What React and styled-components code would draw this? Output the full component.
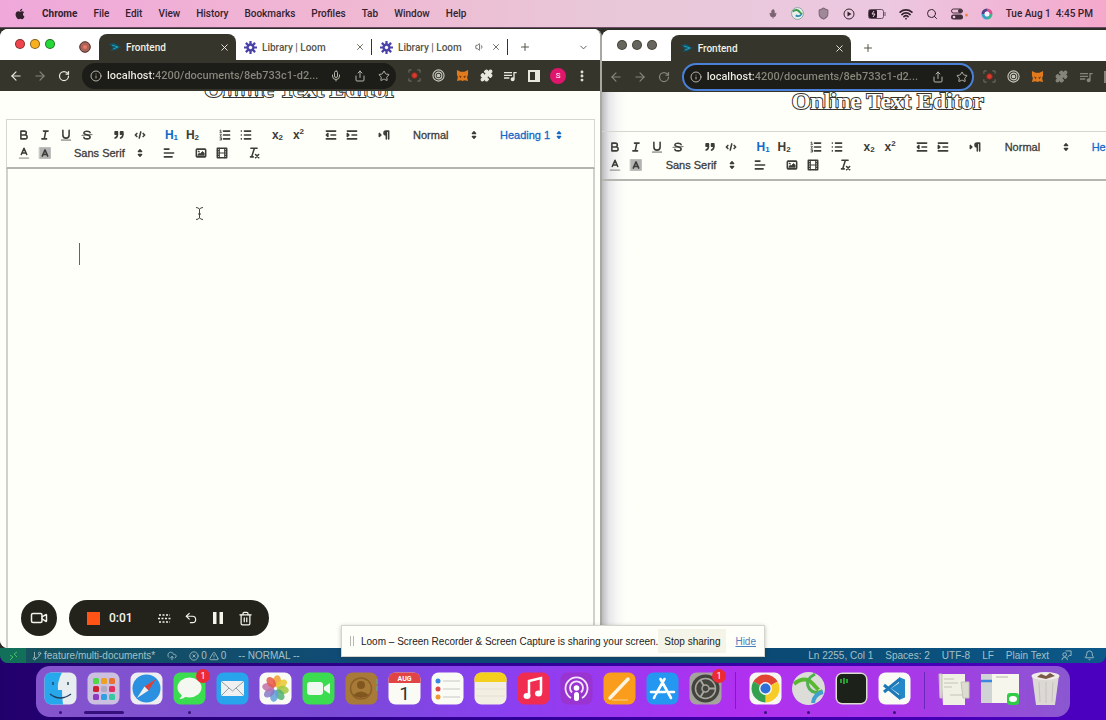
import React from "react";
import styled, { createGlobalStyle, css } from "styled-components";
import {
  ArrowLeft, ArrowRight, RotateCw, Info, Mic, Share, Star, X, Plus, ChevronDown,
  EllipsisVertical, Wifi, Search, Trash2, Undo2, Volume1, Shield, Puzzle,
  GitBranch, CloudUpload, CircleX, TriangleAlert, Bell, Video,
} from "lucide-react";
import { FaApple } from "react-icons/fa";
import { MdOutlineQueueMusic } from "react-icons/md";

const Global = createGlobalStyle`
  * { box-sizing: border-box; }
  html, body { margin: 0; }
  body { font-family: Roboto, "Liberation Sans", sans-serif; font-size: 10px; background: #2b0088; }
  button, input, select { font: inherit; color: inherit; border: 0; margin: 0; padding: 0; background: none; }
  svg { display: block; flex: none; }
`;

const Desktop = styled.main`
  position: relative;
  min-height: 100vh;
  display: flex;
  flex-direction: column;
  overflow: hidden;
  background: linear-gradient(90deg, #22006c, #32009a 50%, #4c00c0);
`;

/* ---------- menu bar ---------- */
const MenuBar = styled.header`
  height: 28px;
  display: flex;
  align-items: center;
  justify-content: space-between;
  padding: 0 13px 0 14px;
  color: #33222e;
  background: linear-gradient(90deg, #efa8da, #f0b6d2 30%, #e8c8d8 55%, #ecc8e0 80%, #f4a8cc);
  border-bottom: 1px solid #6d4a66;
`;
const MenuGroup = styled.nav`
  display: flex;
  align-items: center;
  gap: ${(p) => p.$gap || 16}px;
  white-space: nowrap;
`;
const MenuItem = styled.button`
  font-weight: ${(p) => (p.$strong ? 700 : 500)};
`;

/* ---------- browser windows ---------- */
const Windows = styled.section`
  flex: 1;
  display: flex;
  overflow: hidden;
  background: #2e2e28;
`;
const Window = styled.section`
  min-width: 0;
  display: flex;
  flex-direction: column;
  overflow: hidden;
  background: #fffffa;
  flex: ${(p) => (p.$back ? "1 1 0" : "0 0 54.4%")};
  border-radius: ${(p) => (p.$back ? "8px 0 0 0" : "8px 8px 0 8px")};
  border-right: ${(p) => (p.$back ? "0" : "2px solid #a8a8a0")};
  margin-top: ${(p) => (p.$back ? 2 : 1)}px;
`;
const TabStrip = styled.div`
  height: 31px;
  display: flex;
  align-items: flex-end;
  background: #fff;
  color: #55554a;
  padding-left: 15px;
  overflow: hidden;
  flex: none;
`;
const Lights = styled.div`
  display: flex;
  gap: 5px;
  height: 26px;
  padding-top: 5px;
  margin-right: ${(p) => (p.$back ? 14 : 24)}px;
`;
const Light = styled.i`
  width: 10px;
  height: 10px;
  border-radius: 50%;
  border: 1px solid rgba(40, 30, 10, 0.55);
  background: ${(p) => p.$c};
`;
const Pinned = styled.button`
  height: 26px;
  width: 20px;
`;
const Tab = styled.button`
  height: 26px;
  width: ${(p) => p.$w}px;
  flex: none;
  display: flex;
  align-items: center;
  gap: 5px;
  padding: 0 6px 0 8px;
  white-space: nowrap;
  font-weight: 500;
  ${(p) => p.$active && css`
    color: #f0f0e4;
    padding: 0 6px 0 10px;
    background: #35352c;
    border-radius: 8px 8px 0 0;
  `}
  ${(p) => p.$line && css`
    border-right: 1px solid #44443a;
    border-image: linear-gradient(transparent 22%, #33332a 22% 78%, transparent 78%) 1;
  `}
`;
const TabEnd = styled.span`
  display: flex;
  gap: 6px;
  margin-left: auto;
`;
const StripButton = styled.button`
  height: 26px;
  padding: 0 11px;
  margin-left: ${(p) => (p.$end ? "auto" : "0")};
`;
const BrowserBar = styled.div`
  height: 31px;
  flex: none;
  display: flex;
  align-items: center;
  gap: 12px;
  padding: 0 10px 0 ${(p) => (p.$back ? 8 : 10)}px;
  overflow: hidden;
  background: #35352c;
  color: ${(p) => (p.$back ? "#85857a" : "#e8e8dc")};
`;
const IconButton = styled.button`
  display: flex;
  align-items: center;
  justify-content: center;
  width: 12px;
  height: 16px;
  flex: none;
  color: ${(p) => p.$c || "inherit"};
`;
const Omnibox = styled.label`
  flex: ${(p) => (p.$back ? "0 0 292px" : "0 1 314px")};
  height: ${(p) => (p.$back ? 28 : 26)}px;
  display: flex;
  align-items: center;
  gap: 12px;
  padding: 0 4px 0 6px;
  border-radius: 14px;
  color: #b4b4a8;
  background: #1c1c18;
  border: 2px solid ${(p) => (p.$back ? "#4a80d8" : "#1c1c18")};
  margin-right: ${(p) => (p.$back ? -2 : 0)}px;
`;
const UrlInput = styled.input`
  flex: 1;
  min-width: 0;
  margin-left: -7px;
  font-size: 11px;
  font-weight: 500;
  outline: 0;
  color: transparent;
  background: linear-gradient(90deg, #f0f0e6 47px, #88887c 47px);
  background-clip: text;
  -webkit-background-clip: text;
`;
const Avatar = styled.button`
  width: 16px;
  height: 16px;
  flex: none;
  margin: 0 -2px;
  border-radius: 50%;
  font-size: 8px;
  color: #fff;
  background: #e0156c;
`;

/* ---------- document page ---------- */
const Page = styled.div`
  flex: 1;
  display: flex;
  overflow: hidden;
  background: ${(p) => (p.$back ? "linear-gradient(90deg, #bcbcc0, #e6e6e8 7px, #f8f8f6 16px, #fffffa 26px)" : "#fffffa")};
  padding: ${(p) => (p.$back ? "0" : "0 5px 0 6px")};
`;
const Doc = styled.article`
  flex: 1 0 ${(p) => (p.$back ? "572px" : "0")};
  display: flex;
  flex-direction: column;
  margin-top: ${(p) => (p.$back ? -5 : -16)}px;
`;
const Heading = styled.h1`
  margin: 0 0 16px;
  font: bold 24px/28px "Liberation Serif", serif;
  text-align: center;
  color: #fff;
  -webkit-text-stroke: 2px #33332c;
  paint-order: stroke fill;
`;
const Tools = styled.div`
  height: 50px;
  border: 1px solid #d6d6d0;
  border-width: ${(p) => (p.$back ? "1px 0" : "1px")};
  border-bottom: 2px solid #b4b4b0;
  padding: ${(p) => (p.$back ? "6px 3px" : "6px")};
  font: 11px/18px "Liberation Sans", Arial, sans-serif;
  color: #3c3c38;
`;
const ToolRow = styled.div`
  display: flex;
  gap: 11px;
`;
const ToolGroup = styled.div`
  display: flex;
`;
const Tool = styled.button`
  width: 21px;
  height: 18px;
  display: flex;
  align-items: center;
  justify-content: center;
  white-space: nowrap;
  font: bold 12px/18px "Liberation Sans", Arial, sans-serif;
  color: ${(p) => (p.$on ? "#1468c8" : "#3c3c38")};
  small { font-size: 8px; line-height: 8px; align-self: ${(p) => (p.$sup ? "flex-start" : "flex-end")}; margin: 2px 0; }
`;
const Picker = styled.label`
  position: relative;
  display: flex;
  align-items: center;
  width: ${(p) => p.$w}px;
  height: 18px;
  color: ${(p) => (p.$on ? "#1468c8" : "inherit")};
  svg { position: absolute; right: 0; pointer-events: none; }
`;
const PickerSelect = styled.select`
  appearance: none;
  width: 100%;
  height: 18px;
  padding-left: 8px;
  -webkit-text-stroke: 0.3px currentColor;
`;
const Editor = styled.div`
  flex: 1;
  padding: 74px 71px;
  border: 2px solid #d0d0cc;
  border-width: ${(p) => (p.$back ? "0" : "0 2px")};
`;
const Caret = styled.i`
  display: block;
  width: 1px;
  height: 22px;
  background: #66665c;
`;
const Pointer = styled.svg`
  position: absolute;
  left: 195px;
  top: 207px;
`;

/* ---------- editor status line ---------- */
const StatusBar = styled.footer`
  height: 15px;
  display: flex;
  align-items: center;
  justify-content: space-between;
  padding-right: 11px;
  font-family: "Liberation Sans", Arial, sans-serif;
  color: #a4c0c4;
  background: linear-gradient(90deg, #17525c, #0e4a78 35%, #0a4a74 70%, #0c5888);
  border-radius: 0 0 8px 8px;
  overflow: hidden;
`;
const StatusGroup = styled.div`
  display: flex;
  align-items: center;
  gap: 12px;
  white-space: nowrap;
`;
const StatusItem = styled.span`
  display: flex;
  align-items: center;
  gap: 2px;
`;
const Remote = styled.button`
  width: 26px;
  height: 15px;
  margin-right: -6px;
  display: flex;
  align-items: center;
  justify-content: center;
  background: #12705a;
  color: #48c060;
`;

/* ---------- dock ---------- */
const DockArea = styled.footer`
  display: flex;
  justify-content: center;
  padding: 3px 0;
`;
const DockBar = styled.nav`
  height: 51px;
  display: flex;
  gap: 10px;
  padding: 6px 8px 0;
  border-radius: 14px;
  background: linear-gradient(90deg, #8455cc, #7a4ad8 30%, #8a40f0 45%, #b030f0 68%, #a838e8 85%, #8a58d0);
`;
const DockItem = styled.button`
  position: relative;
  width: ${(p) => p.$w || 33}px;
  height: 42px;
  display: flex;
  align-items: flex-start;
  &::after {
    content: "";
    display: ${(p) => (p.$run ? "block" : "none")};
    position: absolute;
    bottom: 0;
    left: calc(50% - ${(p) => (p.$run || 0) / 2}px);
    width: ${(p) => p.$run}px;
    height: 3px;
    border-radius: 2px;
    background: #35107c;
  }
`;
const Badge = styled.span`
  position: absolute;
  top: -3px;
  right: -4px;
  width: 14px;
  height: 14px;
  border-radius: 50%;
  font-size: 9px;
  line-height: 14px;
  color: #fff;
  background: #ec2a34;
`;
const Divider = styled.i`
  width: 1px;
  height: 37px;
  margin: 0 3px;
  background: #6a28b8;
`;

/* ---------- floating panels ---------- */
const Recorder = styled.div`
  position: absolute;
  left: 21px;
  bottom: 84px;
  display: flex;
  gap: 12px;
  color: #f4f4ea;
`;
const CameraButton = styled.button`
  width: 36px;
  height: 36px;
  display: grid;
  place-items: center;
  border-radius: 50%;
  background: #23231c;
`;
const RecorderPill = styled.div`
  height: 36px;
  display: flex;
  align-items: center;
  gap: 15px;
  padding: 0 18px;
  border-radius: 18px;
  background: #23231c;
`;
const Elapsed = styled.time`
  width: 34px;
  margin-left: -6px;
  font-size: 12px;
  font-weight: 500;
`;
const StopSquare = styled.button`
  width: 13px;
  height: 13px;
  background: #ff5416;
`;
const ShareNotice = styled.aside`
  position: absolute;
  left: 50%;
  transform: translateX(-50%);
  bottom: 63px;
  width: 424px;
  height: 32px;
  display: flex;
  align-items: center;
  padding: 0 8px 0 7px;
  white-space: nowrap;
  font-family: "Liberation Sans", Arial, sans-serif;
  color: #22221c;
  background: #fffffa;
  border: 1px solid #d4d4cc;
  box-shadow: 0 1px 4px rgba(40, 40, 30, 0.3);
`;
const NoticeText = styled.span`
  flex: 1;
  margin-left: 6px;
`;
const StopSharing = styled.button`
  width: 78px;
  height: 24px;
  background: #f4f4e8;
`;
const HideLink = styled.a`
  margin-left: 9px;
  color: #4a80c0;
`;

const S = (p) => <svg width="14" height="14" viewBox="0 0 18 18" fill="none" stroke="currentColor" strokeWidth="2" strokeLinecap="round" strokeLinejoin="round" aria-hidden="true" {...p} />;

const Arrows = () => (
  <S><polygon points="7 11 9 13 11 11" fill="currentColor" /><polygon points="7 7 9 5 11 7" fill="currentColor" /></S>
);

const Leaf = () => (
  <svg width="12" height="12" viewBox="0 0 12 12"><path d="M0 3l5-1 7 4-5 3-6 1 3-3z" fill="#125468" /><path d="M3 4l6 2-5 2" stroke="#22a0b8" fill="none" /></svg>
);
const Loom = () => (
  <svg width="13" height="13" viewBox="0 0 14 14" fill="none" stroke="#4a42a8">
    <g strokeWidth="2.4"><path d="M7 0v14M0 7h14M2 2l10 10M12 2L2 12" /></g>
    <circle cx="7" cy="7" r="4" fill="#4a42a8" /><circle cx="7" cy="7" r="1.8" fill="#fff" stroke="none" />
  </svg>
);
const Target = ({ c = "#c8c8bc" }) => (
  <svg width="13" height="13" viewBox="0 0 14 14" fill="none" stroke={c} strokeWidth="1.2"><circle cx="7" cy="7" r="6" /><circle cx="7" cy="7" r="3.6" /><circle cx="7" cy="7" r="1.4" fill={c} /></svg>
);
const Capture = () => (
  <svg width="13" height="13" viewBox="0 0 14 14" fill="none" stroke="#77776a"><path d="M1 4V1h3M10 1h3v3M13 10v3h-3M4 13H1v-3" /><circle cx="7" cy="7" r="3" fill="#d83a2c" stroke="#8a2a20" /></svg>
);
const Fox = () => (
  <svg width="13" height="13" viewBox="0 0 14 14"><path d="M1 1l4 2h4l4-2v5l-1 3 1 4-4-1-2 1-2-1-4 1 1-4-1-3z" fill="#e07a1c" /><path d="M3 7l3 1-1 2zM11 7L8 8l1 2z" fill="#6a3410" /></svg>
);
const SidePanel = () => (
  <svg width="12" height="12" viewBox="0 0 12 12"><rect x="1" y="1" width="10" height="10" fill="none" stroke="currentColor" strokeWidth="2" /><path d="M7 1h4v10H7z" fill="currentColor" /></svg>
);
const Globe = () => (
  <svg width="13" height="13" viewBox="0 0 14 14"><circle cx="7" cy="7" r="6.4" fill="#e8efe8" stroke="#8aa0a0" /><path d="M2 5q4-4 8 1l2 2" stroke="#3a9a50" strokeWidth="2" fill="none" /><path d="M5 9q4 2 6-1" stroke="#308ab8" strokeWidth="2" fill="none" /></svg>
);
const PlayRing = () => (
  <svg width="12" height="12" viewBox="0 0 12 12"><circle cx="6" cy="6" r="5" fill="none" stroke="currentColor" /><path d="M4.500 3.500v5l4-2.500z" fill="currentColor" /></svg>
);
const Controls = () => (
  <svg width="17" height="12" viewBox="0 0 17 12"><rect x=".5" y="1" width="11" height="4" rx="2" fill="none" stroke="#44303c" /><circle cx="9" cy="3" r="2" fill="#44303c" /><rect x="0" y="6.500" width="12" height="5" rx="2.500" fill="#44303c" /><circle cx="3" cy="9" r="1.300" fill="#ecc8e0" /><circle cx="15.500" cy="7" r="1.500" fill="#f08840" /></svg>
);
const Siri = () => (
  <svg width="12" height="12" viewBox="0 0 12 12" fill="none" strokeWidth="3"><path d="M6 2a4 4 0 0 0-4 4" stroke="#50408a" /><path d="M2 6a4 4 0 0 0 4 4" stroke="#3aa0c8" /><path d="M6 10a4 4 0 0 0 4-4" stroke="#38b890" /><path d="M10 6a4 4 0 0 0-4-4" stroke="#d85090" /><circle cx="6" cy="6" r="2.4" fill="#f4f4ff" stroke="none" /></svg>
);
const Battery = () => (
  <svg width="18" height="10" viewBox="0 0 18 10"><rect x=".5" y=".5" width="15" height="9" rx="2" fill="none" stroke="#66505e" /><rect x="1" y="1" width="8" height="8" rx="1" fill="#2a1c26" /><path d="M6 2L4 5h3L5 8" stroke="#eed0e0" fill="none" /><path d="M17 3v4" stroke="#66505e" /></svg>
);

function ToolbarOptions({ back }) {
  const opts = [
    ["Bold", <S><path d="M5,4H9.5a2.5,2.5,0,0,1,0,5H5ZM5,9h5.5a2.5,2.5,0,0,1,0,5H5Z" /></S>],
    ["Italic", <S><path d="M7,4H13M5,14H11M8,14L10,4" /></S>],
    ["Underline", <S><path d="M5,3V9a4,4,0,0,0,8,0V3" /><path d="M3,15.5H15" strokeWidth="1" /></S>],
    ["Strike", <S><path d="M15.5,8.5L2.5,9.5" strokeWidth="1" /><path d="M13,6C12.500,4,5,3,5,6.500C5,9.500,13,8,13,11.500C13,15,5.500,14.500,5,12" /></S>],
  ];
  const list = (marks) => <S><path d="M7,4H15M7,9H15M7,14H15" />{marks}</S>;
  return (
    <Tools $back={back} role="toolbar" aria-label="Formatting">
      <ToolRow>
        <ToolGroup>{opts.map(([n, i]) => <Tool key={n} aria-label={n}>{i}</Tool>)}</ToolGroup>
        <ToolGroup>
          <Tool aria-label="Quote"><S><rect x="4" y="5" width="3" height="3" fill="currentColor" /><rect x="11" y="5" width="3" height="3" fill="currentColor" /><path d="M7,8c0,4-3,5-3,5M14,8c0,4-3,5-3,5" /></S></Tool>
          <Tool aria-label="Code"><S><path d="M5,7L3,9L5,11M13,7L15,9L13,11M10,5L8,13" /></S></Tool>
        </ToolGroup>
        <ToolGroup><Tool $on>H<small>1</small></Tool><Tool>H<small>2</small></Tool></ToolGroup>
        <ToolGroup>
          <Tool aria-label="Ordered list">{list(<path strokeWidth="1" d="M2.500,5.500H4.500M3.500,5.500V2.500L2.500,3M2.500,8H4.500L2.500,10.500H4.500M2.500,12.500H4.500V15.500H2.500M3,14H4.500" />)}</Tool>
          <Tool aria-label="Bullet list">{list(<path d="M3,4H3.010M3,9H3.010M3,14H3.010" />)}</Tool>
        </ToolGroup>
        <ToolGroup><Tool>x<small>2</small></Tool><Tool $sup>x<small>2</small></Tool></ToolGroup>
        <ToolGroup>
          <Tool aria-label="Outdent"><S><path d="M3,14H15M3,4H15M9,9H15M5,7V11L3,9Z" /></S></Tool>
          <Tool aria-label="Indent"><S><path d="M3,14H15M3,4H15M9,9H15M3,7V11L5,9Z" /></S></Tool>
        </ToolGroup>
        <ToolGroup><Tool aria-label="Direction"><S><path d="M3,7V11L5,9Z" fill="currentColor" /><path d="M15,4H11.500A2.500,2.500,0,0,0,11.500,9H12M12,4V14M15,4V14" /><path d="M11,5V8" /></S></Tool></ToolGroup>
        <Picker $w={76}><PickerSelect aria-label="Size" defaultValue="n"><option value="n">Normal</option></PickerSelect><Arrows /></Picker>
        <Picker $w={74} $on><PickerSelect aria-label="Heading" defaultValue="h"><option value="h">Heading 1</option></PickerSelect><Arrows /></Picker>
      </ToolRow>
      <ToolRow>
        <ToolGroup>
          <Tool aria-label="Text colour"><S><path d="M3,15.500H15" strokeWidth="1.500" opacity=".5" /><path d="M5.500,11L9,3L12.500,11M11.600,9H6.400" /></S></Tool>
          <Tool aria-label="Highlight"><S><rect x="2" y="2" width="14" height="14" fill="#b4b4b4" stroke="#b4b4b4" strokeWidth="1" /><path d="M5.500,13L9,5L12.500,13M11.600,11H6.400" /></S></Tool>
        </ToolGroup>
        <Picker $w={81}><PickerSelect aria-label="Font" defaultValue="s"><option value="s">Sans Serif</option></PickerSelect><Arrows /></Picker>
        <ToolGroup><Tool aria-label="Align"><S><path d="M3,9H15M3,14H13M3,4H9" /></S></Tool></ToolGroup>
        <ToolGroup>
          <Tool aria-label="Image"><S><rect x="3" y="4" width="12" height="10" rx="1" /><circle cx="6" cy="7" r=".6" fill="currentColor" strokeWidth="1" /><path d="M5,12V11L7,9L8,10L11,7L13,9V12Z" fill="currentColor" strokeWidth="1" /></S></Tool>
          <Tool aria-label="Video"><S><rect x="3" y="3" width="12" height="12" /><path d="M5.500,3V15M12.500,3V15M5.500,9H12.500M3,6H5M3,9H5M3,12H5M13,6H15M13,9H15M13,12H15" strokeWidth="1.500" /></S></Tool>
        </ToolGroup>
        <ToolGroup><Tool aria-label="Clear format"><S><path d="M5,3H13M6,14L9.500,3M4.500,14H8" /><path d="M11,11L15,15M15,11L11,15" /></S></Tool></ToolGroup>
      </ToolRow>
    </Tools>
  );
}

function Browser({ back }) {
  const lights = back ? ["#66665e", "#66665e", "#66665e"] : ["#f0444c", "#f8b020", "#24d838"];
  return (
    <Window $back={back}>
      <TabStrip>
        <Lights $back={back}>{lights.map((c, i) => <Light key={i} $c={c} />)}</Lights>
        {!back && <Pinned aria-label="Pinned tab"><svg width="12" height="12" viewBox="0 0 12 12"><circle cx="6" cy="6" r="5.300" fill="#a86458" stroke="#4a2a24" /><circle cx="6" cy="6" r="2" fill="#e87868" /></svg></Pinned>}
        <Tab $active $w={back ? 180 : 137}><Leaf />Frontend<TabEnd><X size={11} /></TabEnd></Tab>
        {!back && <>
          <Tab $w={136} $line><Loom />Library | Loom<TabEnd><X size={10} /></TabEnd></Tab>
          <Tab $w={136} $line><Loom />Library | Loom<TabEnd><Volume1 size={10} /><X size={10} /></TabEnd></Tab>
        </>}
        <StripButton aria-label="New tab"><Plus size={12} /></StripButton>
        {!back && <StripButton $end aria-label="Search tabs"><ChevronDown size={11} /></StripButton>}
      </TabStrip>
      <BrowserBar $back={back}>
        <IconButton aria-label="Back"><ArrowLeft size={14} /></IconButton>
        <IconButton aria-label="Forward" $c="#85857a"><ArrowRight size={14} /></IconButton>
        <IconButton aria-label="Reload"><RotateCw size={12} strokeWidth={2.5} /></IconButton>
        <Omnibox $back={back}>
          <Info size={12} />
          <UrlInput aria-label="Address" readOnly value="localhost:4200/documents/8eb733c1-d2..." />
          {!back && <Mic size={12} />}
          <Share size={12} />
          <Star size={12} />
        </Omnibox>
        <IconButton aria-label="Capture"><Capture /></IconButton>
        <IconButton aria-label="Recorder"><Target /></IconButton>
        <IconButton aria-label="Wallet"><Fox /></IconButton>
        <IconButton aria-label="Extensions"><Puzzle size={13} fill="currentColor" /></IconButton>
        <IconButton aria-label="Media"><MdOutlineQueueMusic size={16} /></IconButton>
        <IconButton aria-label="Side panel"><SidePanel /></IconButton>
        {!back && <>
          <Avatar>S</Avatar>
          <IconButton aria-label="Menu"><EllipsisVertical size={14} strokeWidth={3} /></IconButton>
        </>}
      </BrowserBar>
      <Page $back={back}>
        <Doc $back={back}>
          <Heading>Online Text Editor</Heading>
          <ToolbarOptions back={back} />
          <Editor $back={back}>{!back && <Caret />}</Editor>
        </Doc>
      </Page>
    </Window>
  );
}

const Tile = ({ fill, children, w = 33 }) => (
  <svg width={w} height="33" viewBox={`0 0 ${w} 33`} aria-hidden="true">
    {fill && <rect x=".5" y=".5" width="32" height="32" rx="7" fill={fill} />}
    {children}
  </svg>
);
const launch = ["#50d848", "#f0a020", "#e87030", "#d02030", "#b0a8c0", "#e03060", "#9038c0", "#30a0e0", "#38c8a0"];
const petals = ["#f0a030", "#e8c830", "#a0c840", "#50b078", "#60a0d8", "#8878c8", "#c070a8", "#e85848"];

const apps = [
  { n: "Finder", run: 3, i: <Tile fill="#e8eef0"><path d="M7 .5H18Q13 10 14 18h4q0 8 1 14.500H7a6.500 6.500 0 0 1-6.500-6.500V7A6.500 6.500 0 0 1 7 .5z" fill="#28a8ec" /><path d="M9 10v3M24 10v3M6 22q10 8 21 0" fill="none" stroke="#204060" strokeWidth="1.400" /></Tile> },
  { n: "Launchpad", run: 40, i: <Tile fill="#ccc0e0">{launch.map((c, k) => <rect key={c} x={6 + (k % 3) * 8} y={6 + Math.floor(k / 3) * 8} width="6" height="6" rx="1.500" fill={c} />)}</Tile> },
  { n: "Safari", i: <Tile fill="#eeeef0"><circle cx="16.500" cy="16.500" r="14" fill="#2c90e0" /><path d="M26 7L18.500 18.500l-4-4z" fill="#e04038" /><path d="M7 26l7.500-11.500 4 4z" fill="#f0f0f0" /></Tile> },
  { n: "Messages", run: 3, badge: 1, i: <Tile fill="#3cdc50"><ellipse cx="16.500" cy="15.500" rx="12" ry="10" fill="#f4f8f0" /><path d="M9 21q0 4-3 6 5 0 7-3z" fill="#f4f8f0" /></Tile> },
  { n: "Mail", i: <Tile fill="#28a4ec"><rect x="5" y="9" width="23" height="15" rx="2" fill="#f0f0f0" /><path d="M6 10l10.500 9L27 10M6 23l7-7M27 23l-7-7" stroke="#90a0a8" fill="none" /></Tile> },
  { n: "Photos", i: <Tile fill="#fbfbf6">{petals.map((c, k) => <ellipse key={c} cx="16.500" cy="9" rx="4" ry="6" fill={c} opacity=".85" transform={`rotate(${k * 45 + 10} 16.500 16.500)`} />)}</Tile> },
  { n: "FaceTime", i: <Tile fill="#3cdc50"><rect x="5" y="10" width="16" height="13" rx="3" fill="#f0f8f0" /><path d="M22 15l6-4v11l-6-4z" fill="#f0f8f0" /></Tile> },
  { n: "Contacts", i: <Tile fill="#a87a38"><circle cx="16" cy="16.500" r="10.500" fill="none" stroke="#8a6028" strokeWidth="1.500" /><circle cx="16" cy="13" r="4" fill="#80581f" /><path d="M8 23q8-7 16 0-8 6-16 0z" fill="#80581f" /><path d="M32 7v5M32 14v5" stroke="#50b0a0" /></Tile> },
  { n: "Calendar", i: <Tile fill="#fbfbf6"><path d="M.5 11V7A6.500 6.500 0 0 1 7 .5h19A6.500 6.500 0 0 1 32.500 7v4z" fill="#e04444" /><text x="16.500" y="8.500" fontSize="7" fontWeight="700" textAnchor="middle" fill="#fff">AUG</text><text x="16.500" y="28" fontSize="19" textAnchor="middle" fill="#333">1</text></Tile> },
  { n: "Reminders", i: <Tile fill="#fbfbf6"><path d="M12 9h17M12 17h17M12 25h17" stroke="#c8c8c4" /><circle cx="7" cy="9" r="2.500" fill="#3888e0" /><circle cx="7" cy="17" r="2.500" fill="#e04848" /><circle cx="7" cy="25" r="2.500" fill="#f09830" /></Tile> },
  { n: "Notes", i: <Tile fill="#f2efe2"><path d="M.5 10V7A6.500 6.500 0 0 1 7 .5h19A6.500 6.500 0 0 1 32.500 7v3z" fill="#f4d01c" /><path d="M2 17h29M2 24h29" stroke="#e4e0d2" /></Tile> },
  { n: "Music", i: <Tile fill="#f02c50"><path d="M12 24V9l12-3v15" stroke="#fff" strokeWidth="2.500" fill="none" /><ellipse cx="10" cy="24" rx="3.500" ry="3" fill="#fff" /><ellipse cx="21.500" cy="21.500" rx="3.500" ry="3" fill="#fff" /></Tile> },
  { n: "Podcasts", i: <Tile fill="#9a34d0"><g fill="none" stroke="#f4e8fc" strokeWidth="1.800"><path d="M11 26a11 11 0 1 1 11 0" /><path d="M12 20.500a6.500 6.500 0 1 1 9 0" /></g><circle cx="16.500" cy="16" r="2.800" fill="#fff" /><rect x="14" y="20" width="5" height="9" rx="2.500" fill="#fff" /></Tile> },
  { n: "Pages", i: <Tile fill="#fa9c1c"><path d="M7 26L25 7" stroke="#fff4e0" strokeWidth="3.500" strokeLinecap="round" /><path d="M9 28h16" stroke="#fcd090" /></Tile> },
  { n: "App Store", i: <Tile fill="#2498f0"><path d="M18.500 7L10 22M14.500 7L25 26M5 20h14M24 20h4M8 26l1-2" stroke="#fff" strokeWidth="2.600" strokeLinecap="round" /></Tile> },
  { n: "Settings", badge: 1, i: <Tile fill="#a4a49c"><circle cx="16.500" cy="16.500" r="14" fill="#44443f" /><circle cx="16.500" cy="16.500" r="10" fill="none" stroke="#a8a8a0" strokeWidth="1.500" /><circle cx="16.500" cy="16.500" r="3.500" fill="none" stroke="#a8a8a0" strokeWidth="1.500" /><path d="M20 16.500h7M14.700 13.500L11.500 8M14.700 19.500L11.500 25" stroke="#a8a8a0" strokeWidth="1.800" /></Tile> },
  null,
  { n: "Chrome", run: 3, i: <Tile fill="#f6f6f2"><path d="M16.500 16.500L4.400 9.500A14 14 0 0 1 28.600 9.500z" fill="#e04434" /><path d="M16.500 16.500L28.600 9.500A14 14 0 0 1 16.500 30.500z" fill="#f8cc28" /><path d="M16.500 16.500V30.500A14 14 0 0 1 4.400 9.500z" fill="#34a050" /><circle cx="16.500" cy="16.500" r="6.500" fill="#f6f6f2" /><circle cx="16.500" cy="16.500" r="5" fill="#2c70d8" /></Tile> },
  { n: "AnyConnect", run: 3, i: <Tile><circle cx="16.500" cy="16.500" r="16.500" fill="#dcdcd8" /><path d="M2 12q11-9 19 0t7 6" stroke="#58b830" strokeWidth="4" fill="none" /><path d="M23 2q-9 5-7 12t13 7" stroke="#50b050" strokeWidth="3" fill="none" /><path d="M21 31q1-9 10-11" stroke="#40a0d0" strokeWidth="4" fill="none" /></Tile> },
  { n: "Terminal", i: <Tile fill="#dcdcd0"><rect x="2" y="2" width="29" height="29" rx="5" fill="#1c221a" /><path d="M6 7v4M9 6v6M12 7v4" stroke="#28a030" strokeWidth="2" /></Tile> },
  { n: "VS Code", run: 3, i: <Tile fill="#fbfbf6"><path d="M21 5l6 2.500v18L21 28v-6l-8-5.500 8-5.500z" fill="#2488c8" /><path d="M22 7L6 20M22 26L6 13" stroke="#1c78b8" strokeWidth="3" /></Tile> },
  null,
  { n: "Documents", i: <Tile><path d="M3 2h24v31H5z" fill="#f0f0e4" /><path d="M1 2h3v24H2zM23 10h8v16h-6z" fill="#dcdcd0" stroke="#c4c4b8" /><path d="M6 7h10M6 11h14M6 15h8M12 23h12" stroke="#c4c4b8" /></Tile> },
  { n: "Minimised window", w: 38, i: <Tile w={38}><rect y="2" width="38" height="29" fill="#f6f6ec" /><path d="M0 2h11v29H0z" fill="#d0d4d4" /><path d="M0 9h11" stroke="#3888e0" strokeWidth="2.500" /><path d="M15 5h12" stroke="#b4b4a8" /><rect x="26" y="21" width="12" height="12" rx="3" fill="#30cc48" /><ellipse cx="32" cy="27" rx="4" ry="3" fill="#fff" /></Tile> },
  { n: "Bin", i: <Tile><path d="M3 3h27l-4 30q-9 1-19 0z" fill="#dcd8d4" /><ellipse cx="16.500" cy="4" rx="14" ry="4" fill="#f0ece8" /><path d="M8 5l4-3 5 2 4-3 5 3-9 3z" fill="#7a5a48" /><path d="M10 10l1 20M17 10v21M24 10l-1 20" stroke="#c8c0c0" /></Tile> },
];

const menus = ["File", "Edit", "View", "History", "Bookmarks", "Profiles", "Tab", "Window", "Help"];

export default function App() {
  return (
    <Desktop>
      <Global />
      <MenuBar>
        <MenuGroup>
          <FaApple size={12} />
          <MenuItem $strong>Chrome</MenuItem>
          {menus.map((m) => <MenuItem key={m}>{m}</MenuItem>)}
        </MenuGroup>
        <MenuGroup $gap={13} aria-label="Status">
          <Mic size={10} fill="currentColor" opacity={0.6} /><Globe />
          <Shield size={13} fill="#a08898" color="#806878" />
          <PlayRing /><Battery /><Wifi size={14} strokeWidth={3} /><Search size={12} />
          <Controls /><Siri />
          <MenuItem>Tue Aug 1&nbsp; 4:45 PM</MenuItem>
        </MenuGroup>
      </MenuBar>
      <Windows>
        <Browser />
        <Browser back />
      </Windows>
      <StatusBar>
        <StatusGroup>
          <Remote aria-label="Remote">
            <svg width="9" height="9" viewBox="0 0 9 9" fill="none" stroke="currentColor"><path d="M1 4l3 2-3 3M8 1L5 3l3 3" /></svg>
          </Remote>
          <StatusItem><GitBranch size={10} />feature/multi-documents*</StatusItem>
          <CloudUpload size={10} />
          <StatusItem><CircleX size={10} />0 <TriangleAlert size={10} />0</StatusItem>
          <StatusItem>-- NORMAL --</StatusItem>
        </StatusGroup>
        <StatusGroup>
          <StatusItem>Ln 2255, Col 1</StatusItem><StatusItem>Spaces: 2</StatusItem><StatusItem>UTF-8</StatusItem><StatusItem>LF</StatusItem><StatusItem>Plain Text</StatusItem>
          <svg width="11" height="11" viewBox="0 0 12 12" fill="none" stroke="currentColor"><circle cx="4" cy="5" r="2" /><path d="M1 11q0-3 3-3t3 3M5 1h6v5H9L7 8" /></svg>
          <Bell size={11} />
        </StatusGroup>
      </StatusBar>
      <DockArea>
        <DockBar aria-label="Dock">
          {apps.map((a, k) => a
            ? <DockItem key={a.n} $run={a.run} $w={a.w} aria-label={a.n}>{a.i}{a.badge && <Badge>{a.badge}</Badge>}</DockItem>
            : <Divider key={k} />)}
        </DockBar>
      </DockArea>

      <Recorder>
        <CameraButton aria-label="Camera"><Video size={18} /></CameraButton>
        <RecorderPill>
          <StopSquare aria-label="Stop" />
          <Elapsed>0:01</Elapsed>
          <IconButton aria-label="Effects">
            <svg width="13" height="13" viewBox="0 0 13 13" stroke="currentColor" strokeWidth="1.500" strokeDasharray="2 1.500"><path d="M1 3h11M0 6.500h13M1 10h11" /></svg>
          </IconButton>
          <IconButton aria-label="Restart"><Undo2 size={14} /></IconButton>
          <IconButton aria-label="Pause"><svg width="10" height="12" viewBox="0 0 10 12" fill="currentColor"><path d="M0 0h3.500v12H0zM6.500 0H10v12H6.500z" /></svg></IconButton>
          <IconButton aria-label="Delete"><Trash2 size={15} /></IconButton>
        </RecorderPill>
      </Recorder>

      <ShareNotice>
        <svg width="6" height="10" viewBox="0 0 6 10" stroke="#b8b8b0"><path d="M1.500 0v10M4.500 0v10" /></svg>
        <NoticeText>Loom – Screen Recorder &amp; Screen Capture is sharing your screen.</NoticeText>
        <StopSharing>Stop sharing</StopSharing>
        <HideLink href="#hide">Hide</HideLink>
      </ShareNotice>

      <Pointer width="9" height="13" viewBox="0 0 9 13" fill="none" stroke="#44443c"><path d="M1 .5q3 0 3.500 2Q5 .5 8 .5M4.500 2v9M1 12.500q3 0 3.500-2 .5 2 3.500 2M3 7h3" /></Pointer>
    </Desktop>
  );
}
